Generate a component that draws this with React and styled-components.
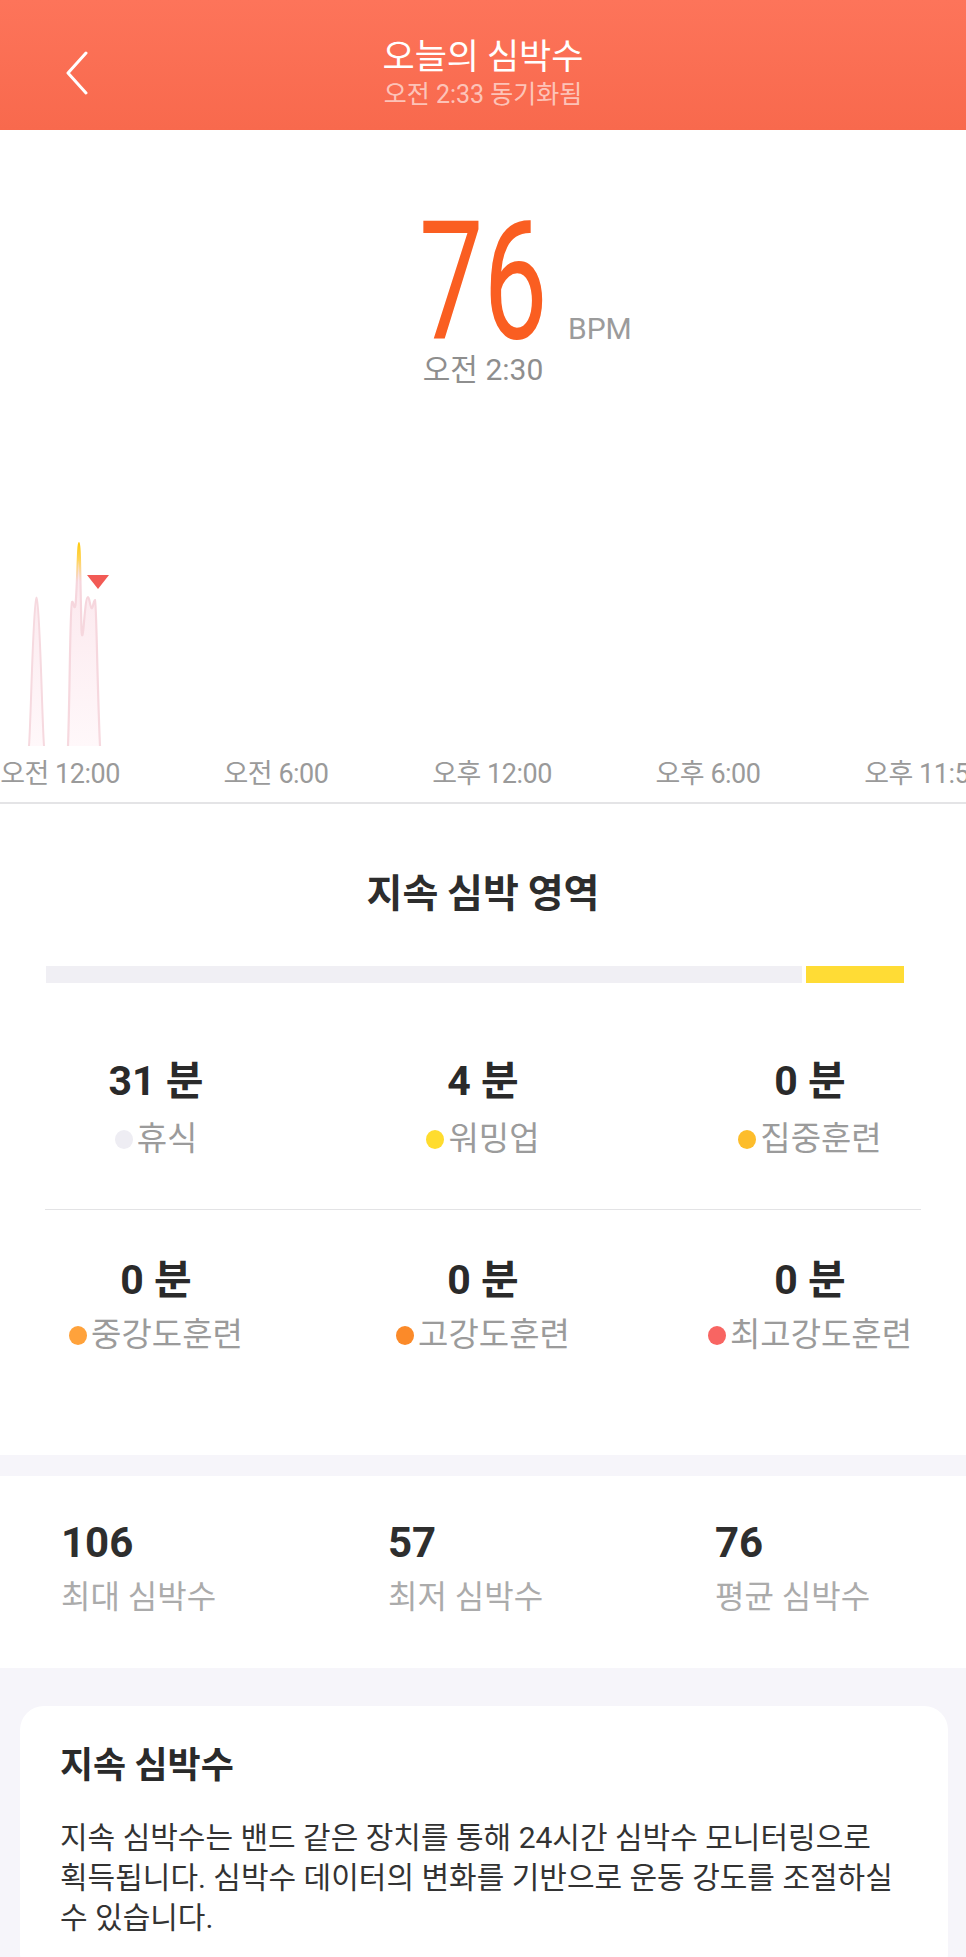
import React from 'react';
import styled, { createGlobalStyle } from 'styled-components';

const GlobalStyle = createGlobalStyle`
  html, body { margin: 0; padding: 0; background: #F6F5FA; }
  body {
    font-family: Roboto, "Noto Sans CJK KR", sans-serif;
    -webkit-font-smoothing: antialiased;
  }
  * { box-sizing: border-box; }
`;

const Page = styled.div`
  width: 966px;
  min-height: 1957px;
  background: #F6F5FA;
  overflow: hidden;
`;

const Header = styled.header`
  height: 130px;
  background: linear-gradient(180deg, #FD745A 0%, #F8694D 100%);
  display: grid;
  grid-template-columns: 140px 1fr 140px;
  color: #fff;
`;

const BackButton = styled.button`
  appearance: none;
  border: 0;
  background: transparent;
  padding: 0 0 0 65px;
  margin-top: 51px;
  height: 44px;
  display: flex;
  align-items: center;
  cursor: pointer;
`;

const HeaderTitles = styled.div`
  display: flex;
  flex-direction: column;
  align-items: center;
  padding-top: 31px;
`;

const Title = styled.h1`
  margin: 0;
  font-family: "Noto Sans CJK KR", sans-serif;
  font-weight: 400;
  font-size: 35px;
  line-height: 46px;
  color: #fff;
`;

const Subtitle = styled.div`
  margin-top: 3px;
  font-size: 25px;
  line-height: 30px;
  color: rgba(255, 255, 255, 0.62);
`;

const Summary = styled.section`
  background: #fff;
  display: flex;
  flex-direction: column;
  align-items: center;
  padding-top: 88px;
`;

const Reading = styled.div`
  position: relative;
  height: 128px;
`;

const BigNumber = styled.div`
  font-family: Roboto, sans-serif;
  font-size: 166px;
  line-height: 128px;
  height: 128px;
  color: #FA5E21;
  transform: scaleX(0.69);
`;

const Unit = styled.span`
  position: absolute;
  top: 96px;
  left: calc(50% + 85px);
  font-size: 30px;
  line-height: 30px;
  color: #9B9B9B;
`;

const ReadingTime = styled.div`
  margin-top: 4px;
  font-size: 30px;
  line-height: 40px;
  color: #8E8E8E;
`;

const Chart = styled.svg`
  display: block;
  width: 966px;
  height: 356px;
`;

const AxisViewport = styled.div`
  width: 966px;
  height: 52px;
  padding-top: 4px;
  overflow: hidden;
  border-bottom: 2px solid #E4E4E6;
  box-sizing: content-box;
`;

const AxisRow = styled.div`
  margin-left: -48px;
  width: 1080px;
  display: grid;
  grid-template-columns: repeat(5, 216px);
`;

const AxisLabel = styled.span`
  text-align: center;
  white-space: nowrap;
  font-size: 27px;
  line-height: 48px;
  color: #9A9A9A;
  letter-spacing: -0.5px;
`;

const Zones = styled.section`
  background: #fff;
  padding: 59px 0 100px;
`;

const SectionTitle = styled.h2`
  margin: 0;
  text-align: center;
  font-family: "Noto Sans CJK KR", sans-serif;
  font-weight: 700;
  font-size: 39px;
  line-height: 54px;
  color: #2D2D2D;
`;

const ZoneBar = styled.div`
  margin: 49px 46px 0;
  height: 17px;
  display: flex;
  gap: 4px;
`;

const ZoneSegment = styled.div`
  flex: ${(p) => p.$minutes} 0 0;
  background: ${(p) => p.$color};
`;

const ZoneRow = styled.div`
  display: grid;
  grid-template-columns: repeat(3, 1fr);
  column-gap: 15px;
  padding-top: ${(p) => p.$top}px;
`;

const ZoneItem = styled.div`
  display: flex;
  flex-direction: column;
  align-items: center;
`;

const ZoneValue = styled.div`
  font-weight: 700;
  font-size: 41px;
  line-height: 52px;
  color: #2A2A2A;
`;

const ZoneLabel = styled.div`
  margin-top: ${(p) => p.$gap}px;
  display: flex;
  align-items: center;
  gap: 4px;
  font-size: 33px;
  line-height: 40px;
  color: #9B9B9B;
`;

const Dot = styled.span`
  flex: 0 0 auto;
  width: 18px;
  height: 19px;
  border-radius: 50%;
  background: ${(p) => p.$color};
`;

const RowDivider = styled.hr`
  margin: 50px 45px 0;
  border: 0;
  border-top: 1px solid #E3E3E5;
`;

const Band = styled.div`
  height: 21px;
  background: #F6F5FA;
`;

const Stats = styled.section`
  background: #fff;
  padding: 41px 0 51px 61px;
  display: grid;
  grid-template-columns: repeat(3, 327px);
`;

const Stat = styled.div`
  display: flex;
  flex-direction: column;
`;

const StatValue = styled.div`
  font-weight: 700;
  font-size: 42px;
  line-height: 52px;
  color: #2E2E2E;
`;

const StatLabel = styled.div`
  margin-top: 8px;
  font-size: 32px;
  line-height: 40px;
  color: #ABABAB;
`;

const InfoArea = styled.section`
  padding: 38px 18px 40px 20px;
  background: #F6F5FA;
`;

const Card = styled.article`
  background: #fff;
  border-radius: 24px;
  padding: 31px 40px 40px;
`;

const CardTitle = styled.h3`
  margin: 0;
  font-family: "Noto Sans CJK KR", sans-serif;
  font-weight: 700;
  font-size: 36px;
  line-height: 50px;
  color: #2A2A2A;
`;

const CardBody = styled.p`
  margin: 31px 0 0;
  font-size: 30px;
  line-height: 40px;
  color: #333;
  word-break: keep-all;
`;

const zoneRows = [
  [
    { v: 31, label: '휴식', color: '#EEEDF3' },
    { v: 4, label: '워밍업', color: '#FFDC2E' },
    { v: 0, label: '집중훈련', color: '#FDBD2B' },
  ],
  [
    { v: 0, label: '중강도훈련', color: '#FFA23B' },
    { v: 0, label: '고강도훈련', color: '#FB8A29' },
    { v: 0, label: '최고강도훈련', color: '#F86562' },
  ],
];

const segments = [
  { m: 31, color: '#F0EFF4' },
  { m: 4, color: '#FFDC35' },
  { m: 0, color: '#FDBD2B' },
  { m: 0, color: '#FFA23B' },
  { m: 0, color: '#FB8A29' },
  { m: 0, color: '#F86562' },
];

const stats = [
  { v: 106, label: '최대 심박수' },
  { v: 57, label: '최저 심박수' },
  { v: 76, label: '평균 심박수' },
];

const axis = ['오전 12:00', '오전 6:00', '오후 12:00', '오후 6:00', '오후 11:59'];

const spike1 = 'M29 356 C31 330 33 212 36.5 208 C40 212 42 330 44 356';
const spike2 =
  'M68 356 C70 300 70 215 72 212 C73.5 210 74 222 75.5 215 C77 200 78 153 79 153 C80 153 80.5 200 81.5 240 C82 250 83 245 84 232 C85.5 215 86.5 207 88 207 C89.5 207 90 217 91.5 218 C93 219 93.5 210 95 210 C96.5 212 97 290 100 356';

function HeartChart() {
  return (
    <Chart viewBox="0 0 966 356">
      <defs>
        <linearGradient id="fillGrad" x1="0" y1="150" x2="0" y2="356" gradientUnits="userSpaceOnUse">
          <stop offset="0" stopColor="#FBE5EB" />
          <stop offset="1" stopColor="#FFF8FA" />
        </linearGradient>
        <linearGradient id="lineGrad" x1="0" y1="150" x2="0" y2="356" gradientUnits="userSpaceOnUse">
          <stop offset="0" stopColor="#FFC800" />
          <stop offset="0.1" stopColor="#FFD560" />
          <stop offset="0.2" stopColor="#F6D6DD" />
          <stop offset="1" stopColor="#F6D9DF" />
        </linearGradient>
      </defs>
      <path d={spike1 + ' Z'} fill="url(#fillGrad)" />
      <path d={spike2 + ' Z'} fill="url(#fillGrad)" />
      <path d={spike1} fill="none" stroke="#F6D9DF" strokeWidth="2" />
      <path d={spike2} fill="none" stroke="url(#lineGrad)" strokeWidth="2.2" />
      <polygon points="87,185 109,185 98,199" fill="#F25A55" />
    </Chart>
  );
}

function ChevronLeft() {
  return (
    <svg width="24" height="44" viewBox="0 0 24 44" fill="none">
      <path d="M21 2 L3 22 L21 42" stroke="#fff" strokeWidth="3" strokeLinecap="round" strokeLinejoin="round" />
    </svg>
  );
}

export default function App() {
  return (
    <Page>
      <GlobalStyle />
      <Header>
        <BackButton aria-label="back">
          <ChevronLeft />
        </BackButton>
        <HeaderTitles>
          <Title>오늘의 심박수</Title>
          <Subtitle>오전 2:33 동기화됨</Subtitle>
        </HeaderTitles>
        <div />
      </Header>

      <Summary>
        <Reading>
          <BigNumber>76</BigNumber>
          <Unit>BPM</Unit>
        </Reading>
        <ReadingTime>오전 2:30</ReadingTime>
        <HeartChart />
        <AxisViewport>
          <AxisRow>
            {axis.map((a) => (
              <AxisLabel key={a}>{a}</AxisLabel>
            ))}
          </AxisRow>
        </AxisViewport>
      </Summary>

      <Zones>
        <SectionTitle>지속 심박 영역</SectionTitle>
        <ZoneBar>
          {segments.map((s, i) => (
            <ZoneSegment key={i} $minutes={s.m} $color={s.color} />
          ))}
        </ZoneBar>
        {zoneRows.map((row, ri) => (
          <React.Fragment key={ri}>
            {ri > 0 && <RowDivider />}
            <ZoneRow $top={ri === 0 ? 72 : 44}>
              {row.map((z) => (
                <ZoneItem key={z.label}>
                  <ZoneValue>{z.v} 분</ZoneValue>
                  <ZoneLabel $gap={ri === 0 ? 12 : 9}>
                    <Dot $color={z.color} />
                    {z.label}
                  </ZoneLabel>
                </ZoneItem>
              ))}
            </ZoneRow>
          </React.Fragment>
        ))}
      </Zones>

      <Band />

      <Stats>
        {stats.map((s) => (
          <Stat key={s.label}>
            <StatValue>{s.v}</StatValue>
            <StatLabel>{s.label}</StatLabel>
          </Stat>
        ))}
      </Stats>

      <InfoArea>
        <Card>
          <CardTitle>지속 심박수</CardTitle>
          <CardBody>
            지속 심박수는 밴드 같은 장치를 통해 24시간 심박수 모니터링으로 획득됩니다. 심박수 데이터의 변화를 기반으로 운동 강도를 조절하실 수 있습니다.
          </CardBody>
        </Card>
      </InfoArea>
    </Page>
  );
}
